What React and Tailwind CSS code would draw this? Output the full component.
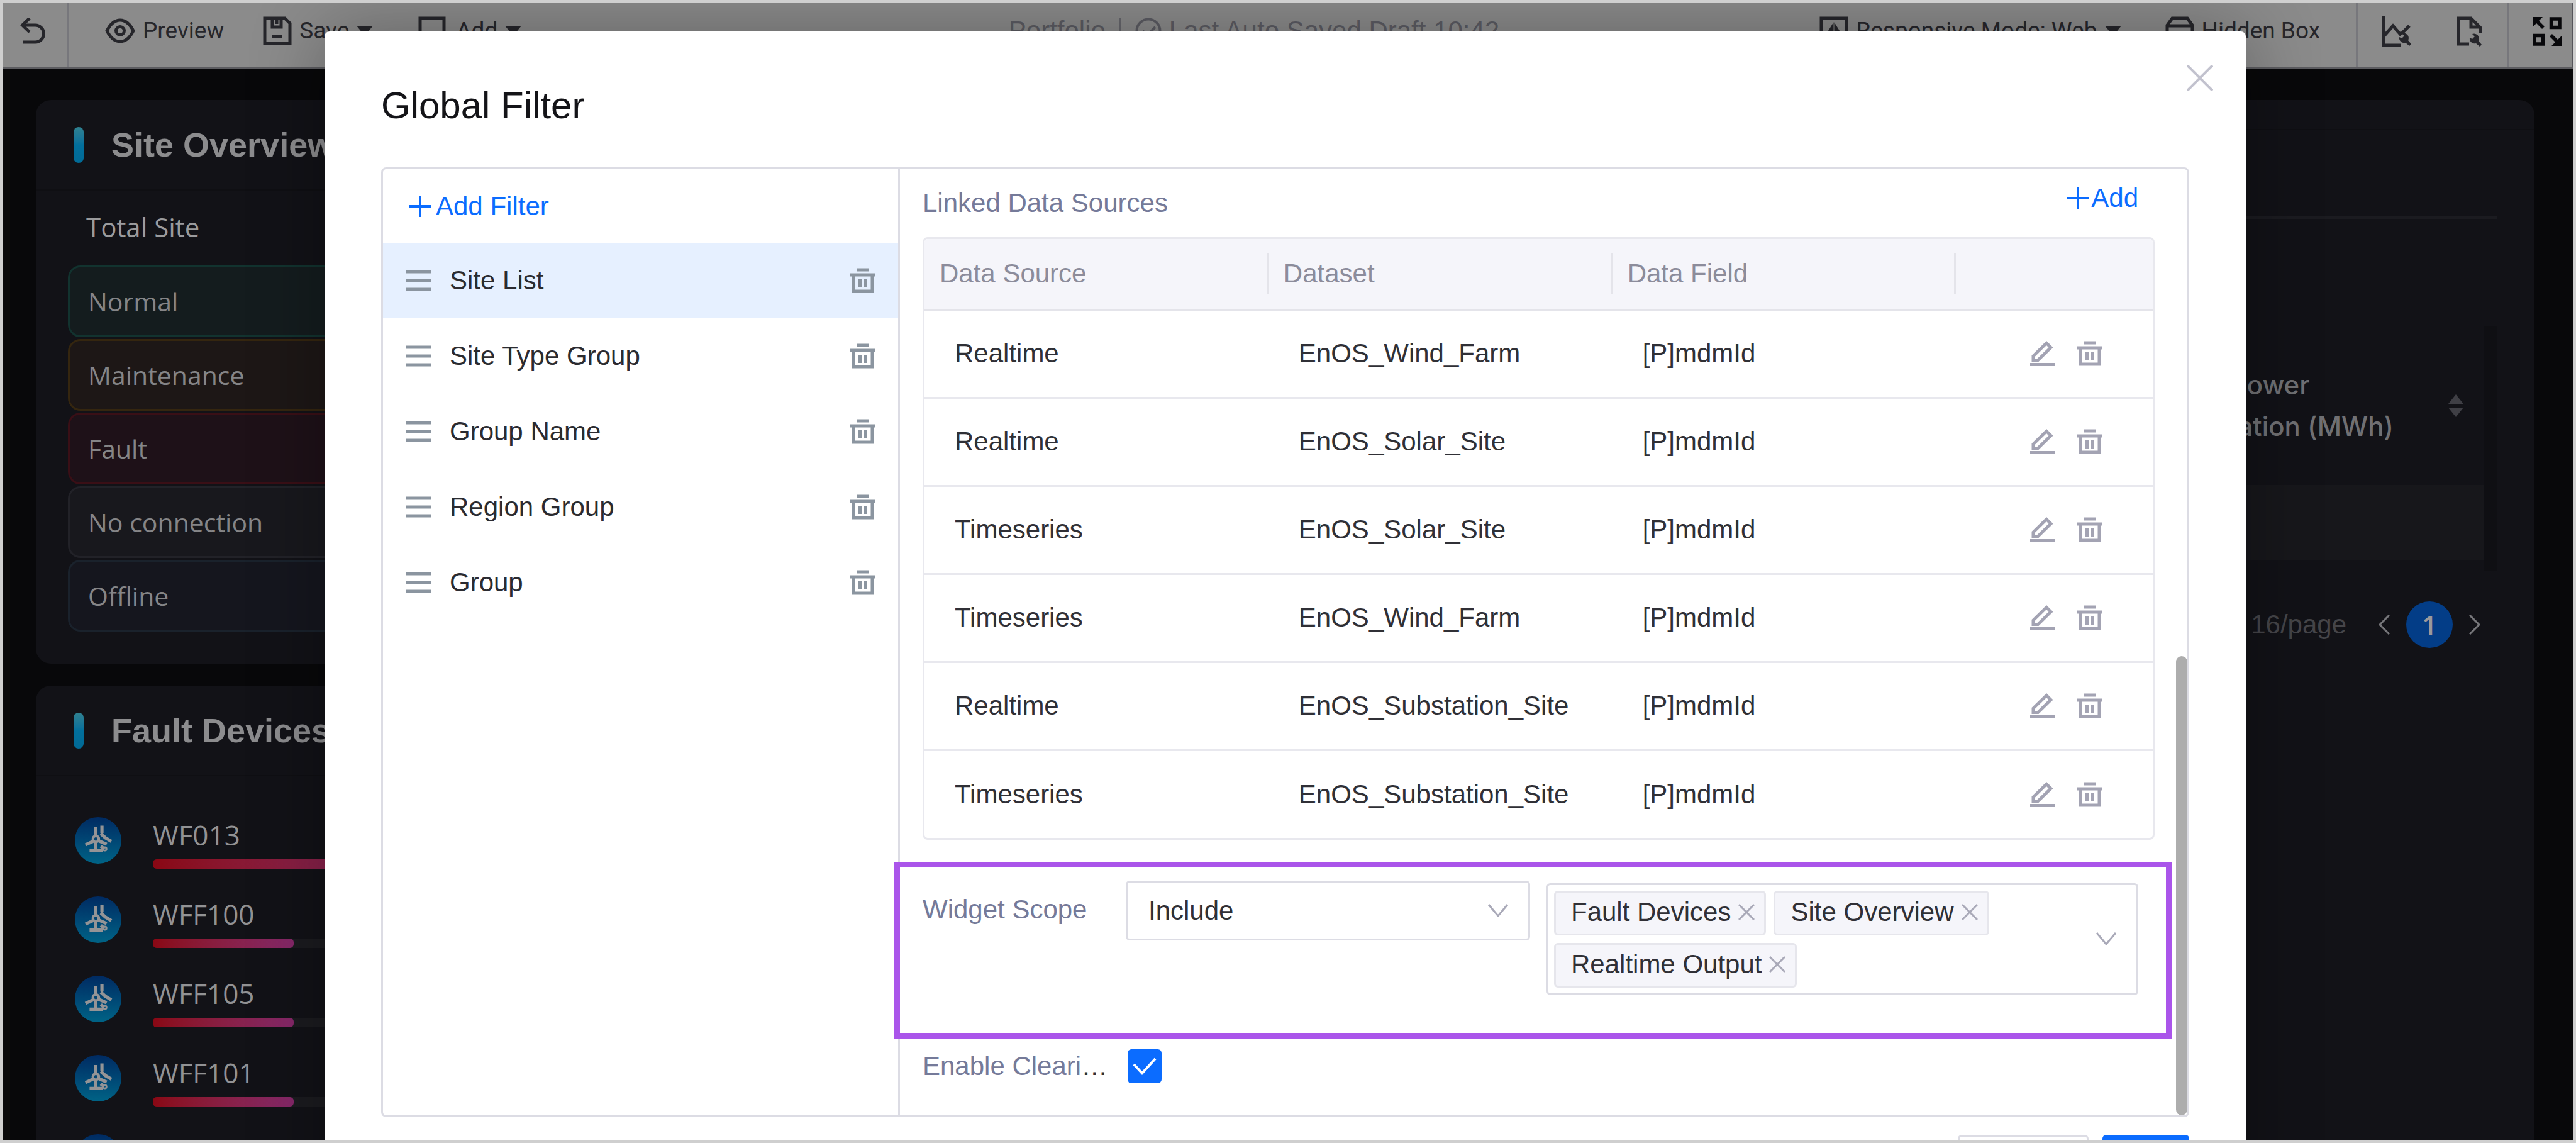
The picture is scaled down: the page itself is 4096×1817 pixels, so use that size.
import React from "react";

const UI = "font-['Liberation_Sans',Arial,sans-serif]";

const filters = ["Site List", "Site Type Group", "Group Name", "Region Group", "Group"];

const sources = [
  ["Realtime", "EnOS_Wind_Farm", "[P]mdmId"],
  ["Realtime", "EnOS_Solar_Site", "[P]mdmId"],
  ["Timeseries", "EnOS_Solar_Site", "[P]mdmId"],
  ["Timeseries", "EnOS_Wind_Farm", "[P]mdmId"],
  ["Realtime", "EnOS_Substation_Site", "[P]mdmId"],
  ["Timeseries", "EnOS_Substation_Site", "[P]mdmId"],
];

const statuses = [
  ["Normal", "border-[#12332f] bg-[#141c1e]"],
  ["Maintenance", "border-[#35260f] bg-[#1d1716]"],
  ["Fault", "border-[#3a0f16] bg-[#1e1118]"],
  ["No connection", "border-[#222228] bg-[#18181d]"],
  ["Offline", "border-[#1a222c] bg-[#15161e]"],
];

const devices = [
  ["WF013", 100],
  ["WFF100", 48],
  ["WFF105", 48],
  ["WFF101", 48],
];

const scopes = ["Fault Devices", "Site Overview", "Realtime Output"];

function Caret() {
  return (
    <svg viewBox="0 0 26 16" className="h-4 w-[26px] shrink-0" fill="currentColor" aria-hidden="true">
      <path d="M0 0h26L13 16z" />
    </svg>
  );
}

function Plus() {
  return (
    <svg viewBox="0 0 34 34" className="size-[34px] shrink-0" stroke="currentColor" strokeWidth="4" aria-hidden="true">
      <path d="M17 0v34M0 17h34" />
    </svg>
  );
}

function Trash({ className }) {
  return (
    <svg viewBox="0 0 40 40" className={className} fill="none" stroke="currentColor" aria-hidden="true">
      <path d="M10 3h20M0 11h40" strokeWidth="5" />
      <path d="M5 11v26h30V11" strokeWidth="5" />
      <path d="M15.500 18v13M24.500 18v13" strokeWidth="5" />
    </svg>
  );
}

function Pencil() {
  return (
    <svg viewBox="0 0 40 40" className="size-10" fill="none" stroke="currentColor" strokeWidth="5" aria-hidden="true">
      <path d="M5 30.500V24L26 3.500l7 7L12.500 30.500z" />
      <path d="M0 37.500h40" />
    </svg>
  );
}

function Down() {
  return (
    <svg viewBox="0 0 32 22" className="pointer-events-none h-[22px] w-8 shrink-0 text-[#a9a9b8]" fill="none" stroke="currentColor" strokeWidth="3" aria-hidden="true">
      <path d="M1 1l15 18L31 1" />
    </svg>
  );
}

function Turbine() {
  return (
    <span className="flex size-[74px] shrink-0 rounded-full bg-linear-to-b from-[#002a62] to-[#006386]">
      <svg viewBox="0 0 79 79" className="size-full" fill="none" stroke="#949496" strokeWidth="5.500" aria-hidden="true">
        <circle cx="35.700" cy="37" r="5" strokeWidth="4.500" />
        <path d="M35.700 17v15M31 41l-13 6M40 40l14 6M35.700 42v14M25 57h22" />
        <path d="M46 14.500V27M44 28l9 8M50 34l12 7M44 49l6 5" />
        <circle cx="51" cy="54" r="1.500" />
      </svg>
    </span>
  );
}

function ToolButton({ children, className }) {
  return <button className={"flex items-center " + (className || "")}>{children}</button>;
}

function Wrench({ x, y }) {
  return (
    <g transform={`translate(${x} ${y})`}>
      <path d="M5 0 L9 4 L5 8 L1 6 A8 8 0 0 0 11 15 L17 20 L20 17 L15 11 A8 8 0 0 0 5 0z" fill="currentColor" stroke="none" />
    </g>
  );
}

function Toolbar() {
  return (
    <header className="flex h-[106px] items-stretch border-b-3 border-[#5c5c60] bg-[#8b8b8b] font-[Roboto,sans-serif] text-[37px] leading-none text-[#26262b]">
      <div className="flex flex-1 items-stretch">
        <div className="flex w-[105px] items-center border-r-3 border-[#77777c] pb-[14px] pl-[28px]">
          <button aria-label="Undo">
            <svg viewBox="0 0 40 42" className="h-[42px] w-10" fill="none" stroke="currentColor" strokeWidth="5">
              <path d="M15 1L3.500 12 15 23M4 12h20a13.500 13.500 0 0 1 0 27H5" />
            </svg>
          </button>
        </div>
        <div className="flex items-center pb-[14px] pl-[58px]">
          <ToolButton className="gap-3">
            <svg viewBox="0 0 48 40" className="h-10 w-12" fill="none" stroke="currentColor" strokeWidth="5" aria-hidden="true">
              <path d="M3 20C9 8 16 3 24 3s15 5 21 17c-6 12-13 17-21 17S9 32 3 20z" />
              <circle cx="24" cy="20" r="6.500" />
            </svg>
            Preview
          </ToolButton>
          <ToolButton className="ml-[62px]">
            <svg viewBox="0 0 46 46" className="size-[46px]" fill="none" stroke="currentColor" strokeWidth="5" aria-hidden="true">
              <path d="M3 3h32l8 8v32H3zM15 3v14h14V3M15 32h16" />
              <path d="M22 3v9" />
            </svg>
            <span className="mr-3 ml-3">Save</span>
            <Caret />
          </ToolButton>
          <ToolButton className="ml-[72px]">
            <svg viewBox="0 0 44 46" className="h-[46px] w-11" fill="none" stroke="currentColor" strokeWidth="5" aria-hidden="true">
              <path d="M41 25V3H3v38h24M33 29v16M25 37h16" />
            </svg>
            <span className="mr-3 ml-4">Add</span>
            <Caret />
          </ToolButton>
        </div>
      </div>
      <div className={"flex items-center gap-[18px] pr-[108px] pb-[14px] text-[42px] text-[#5c5c63] " + UI}>
        <span>Portfolio</span>
        <span className="mx-1 h-[42px] w-[3px] bg-[#66666c]" />
        <span className="flex items-center gap-3">
          <svg viewBox="0 0 42 42" className="size-[42px]" fill="none" stroke="currentColor" strokeWidth="4" aria-hidden="true">
            <circle cx="21" cy="21" r="18.500" />
            <path d="M12 21l7 7 13-13" />
          </svg>
          Last Auto Saved Draft 10:42
        </span>
      </div>
      <div className="flex flex-1 items-stretch justify-end">
        <div className="flex items-center pr-[57px] pb-[14px]">
          <ToolButton>
            <svg viewBox="0 0 46 46" className="size-[46px]" fill="none" stroke="currentColor" strokeWidth="5" aria-hidden="true">
              <path d="M3 3h40v32H3zM12 43h22M15 26l5-8v12M31 26l-5-8v12" />
            </svg>
            <span className="mr-3 ml-3">Responsive Mode: Web</span>
            <Caret />
          </ToolButton>
          <ToolButton className="ml-[70px] gap-3">
            <svg viewBox="0 0 46 46" className="size-[46px]" fill="none" stroke="currentColor" strokeWidth="5" aria-hidden="true">
              <path d="M11 3h24l8 11v29H3V14zM3 15h40M15 24v3M31 24v3M14 33h18" />
            </svg>
            Hidden Box
          </ToolButton>
        </div>
        <div className="flex w-[243px] items-center justify-between border-x-3 border-[#77777c] pr-[38px] pb-[12px] pl-[38px]">
          <button aria-label="Chart settings">
            <svg viewBox="0 0 48 50" className="h-[50px] w-12" fill="none" stroke="currentColor" strokeWidth="5">
              <path d="M3 0v47h28M3 33l15-17 13 15M32 28l12-12" />
              <Wrench x={27} y={28} />
            </svg>
          </button>
          <button aria-label="Page settings">
            <svg viewBox="0 0 42 48" className="h-12 w-[42px]" fill="none" stroke="currentColor" strokeWidth="5">
              <path d="M20 44H3V3h20l15 15v8M23 3v14h15" />
              <Wrench x={20} y={28} />
            </svg>
          </button>
        </div>
        <div className="flex w-[103px] items-center border-r-3 border-[#55555a] pb-[12px] pl-[38px] text-[#08080b]">
          <button aria-label="Full screen">
            <svg viewBox="0 0 46 46" className="size-[46px]" fill="none" stroke="currentColor" strokeWidth="5.500">
              <path d="M29.500 3h13.500v13.500H29.500zM3 29.500h13.500v13.500H3z" />
              <path d="M5 5l12 12M29 29l12 12" />
              <path d="M0 0h16L0 16zM46 46H30l16-16z" fill="currentColor" stroke="none" />
            </svg>
          </button>
        </div>
      </div>
    </header>
  );
}

function PanelTitle({ children }) {
  return (
    <div className="flex h-[144px] items-center border-b-2 border-[#0f0f13] pl-[60px]">
      <span className="h-[57px] w-4 rounded-full bg-linear-to-b from-[#2f8190] via-[#026f9c] to-[#016a96]" />
      <h2 className="ml-[44px] text-[54px] leading-none font-bold whitespace-nowrap text-[#8c8c8e]">{children}</h2>
    </div>
  );
}

function Dashboard() {
  return (
    <main className={"flex flex-1 items-stretch gap-9 overflow-hidden pt-[49px] pr-[62px] pl-[53px] " + UI}>
      <div className="flex w-[700px] shrink-0 flex-col gap-[35px]">
        <section className="rounded-3xl bg-[#121217] pb-[51px]">
          <PanelTitle>Site Overview</PanelTitle>
          <div className="font-['Open_Sans',sans-serif] text-[41px] leading-none">
            <p className="flex h-[119px] items-center pb-1 pl-[80px] text-[42px] text-[#9b9b9d]">Total Site</p>
            <ul className="mx-[51px] flex flex-col gap-[3px] text-[#858587]">
              {statuses.map(([name, tone]) => (
                <li key={name} className={"flex h-[114px] items-center rounded-[20px] border-3 pl-[29px] " + tone}>
                  {name}
                </li>
              ))}
            </ul>
          </div>
        </section>
        <section className="flex-1 rounded-t-3xl bg-[#121217]">
          <PanelTitle>Fault Devices</PanelTitle>
          <ul className="mt-[65px] flex flex-col gap-[40px] pr-[48px] pl-[62px]">
            {devices.map(([name, level]) => (
              <li key={name} className="flex items-start gap-[50px]">
                <Turbine />
                <div className="h-[86px] flex-1">
                  <p className="h-[67px] font-['Open_Sans',sans-serif] text-[44px] leading-[56px] font-medium text-[#929294]">{name}</p>
                  <div className="h-[15px] rounded-md bg-[#1b1b1f]">
                    <div className="h-full rounded-md bg-linear-to-r from-[#8a0713] to-[#86286a]" style={{ width: level + "%" }} />
                  </div>
                </div>
              </li>
            ))}
            <li>
              <Turbine />
            </li>
          </ul>
        </section>
      </div>
      <section className="flex-1 rounded-t-3xl bg-[#121217] pr-[59px]">
        <div className="-mr-[59px] h-[48px] border-b-2 border-[#0f0f13]" />
        <div className="mt-[136px] h-[5px] bg-[#1b1b20]" />
        <div className="mt-[171px] border-r-[21px] border-[#0f0f13] pb-[17px]">
          <table className="w-full border-collapse text-left">
            <thead>
              <tr>
                <th className="h-[252px] pr-[33px] font-medium">
                  <button className="ml-auto flex items-center gap-[87px] text-left font-[Inter,sans-serif] text-[42px] leading-[66px] font-medium text-[#707073]">
                    <span>
                      Total Power
                      <br />
                      Generation (MWh)
                    </span>
                    <svg viewBox="0 0 24 36" className="h-9 w-6 text-[#3f3f45]" fill="currentColor" aria-hidden="true">
                      <path d="M12 0l12 15H0zM12 36L0 21h24z" />
                    </svg>
                  </button>
                </th>
              </tr>
            </thead>
            <tbody>
              <tr>
                <td className="h-[120px] bg-[#17171b]" />
              </tr>
            </tbody>
          </table>
        </div>
        <nav className="mt-[48px] flex items-center justify-end pr-[26px] text-[42px] leading-none text-[#77777b]">
          <span className="mr-[50px] text-[#454549]">16/page</span>
          <button aria-label="Previous page">
            <svg viewBox="0 0 20 32" className="h-8 w-5" fill="none" stroke="currentColor" strokeWidth="3">
              <path d="M18 1L3 16l15 15" />
            </svg>
          </button>
          <button className="mx-[25px] size-[74px] rounded-full bg-[#033d87] font-['Open_Sans',sans-serif] font-semibold text-[#9a9a9c]">1</button>
          <button aria-label="Next page">
            <svg viewBox="0 0 20 32" className="h-8 w-5" fill="none" stroke="currentColor" strokeWidth="3">
              <path d="M2 1l15 15L2 31" />
            </svg>
          </button>
        </nav>
      </section>
    </main>
  );
}

function FilterList() {
  return (
    <aside className="w-[822px] shrink-0 border-r-3 border-[#dcdce4]">
      <button className="flex h-[117px] items-center gap-2 pl-[42px] text-[#0b6cff]">
        <Plus />
        Add Filter
      </button>
      <ul>
        {filters.map((name, i) => (
          <li key={name} className={"flex h-[120px] items-center pr-[36px] pl-[36px] text-[#2b2b30] " + (i === 0 ? "bg-[#e6f0ff]" : "")}>
            <svg viewBox="0 0 40 36" className="mr-[30px] h-9 w-10 text-[#8b95a0]" stroke="currentColor" strokeWidth="5" aria-hidden="true">
              <path d="M0 4h40M0 18h40M0 32h40" />
            </svg>
            <span className="flex-1">{name}</span>
            <button aria-label={"Delete " + name} className="text-[#8b95a0]">
              <Trash className="size-10" />
            </button>
          </li>
        ))}
      </ul>
    </aside>
  );
}

function SourceTable() {
  return (
    <div className="overflow-hidden rounded-lg border-3 border-[#e8e8ee]">
      <table className="w-full table-fixed border-collapse text-left">
        <thead className="bg-[#f5f5fa] text-[#8c8c9b]">
          <tr className="h-[112px] border-b-3 border-[#e4e4ea]">
            {["Data Source", "Dataset", "Data Field"].map((h) => (
              <th key={h} className="w-[28%] p-0 font-normal">
                <span className="flex h-[66px] items-center border-r-3 border-[#e4e4ea] pl-6">{h}</span>
              </th>
            ))}
            <th aria-label="Actions" />
          </tr>
        </thead>
        <tbody className="text-[#303036]">
          {sources.map((row, i) => (
            <tr key={i} className="h-[140px] border-b-3 border-[#e8e8ee] last:border-b-0">
              {row.map((cell, j) => (
                <td key={j} className="p-0 pl-12">
                  {cell}
                </td>
              ))}
              <td className="p-0 pr-[80px]">
                <span className="flex justify-end gap-[35px] text-[#a3a3b3]">
                  <button aria-label="Edit">
                    <Pencil />
                  </button>
                  <button aria-label="Delete">
                    <Trash className="size-10" />
                  </button>
                </span>
              </td>
            </tr>
          ))}
        </tbody>
      </table>
    </div>
  );
}

function FilterDialog() {
  return (
    <div
      role="dialog"
      aria-label="Global Filter"
      className={"relative h-fit flex-1 rounded-t-lg bg-white px-[90px] pt-[82px] pb-[60px] text-[42px] leading-[48px] shadow-[0_0_120px_rgba(0,0,0,0.3)] " + UI}
    >
      <h1 className="mb-[62px] text-[60px] leading-[72px] text-[#141418]">Global Filter</h1>
      <button aria-label="Close" className="absolute top-[53px] right-[52px]">
        <svg viewBox="0 0 42 42" className="size-[42px] text-[#c2c2ce]" stroke="currentColor" strokeWidth="4">
          <path d="M1 1l40 40M41 1L1 41" />
        </svg>
      </button>
      <div className="relative flex items-stretch rounded-lg border-3 border-[#dcdce4]">
        <FilterList />
        <section className="min-w-0 flex-1 pr-[52px] pb-[51px] pl-[36px]">
          <div className="flex h-[108px] justify-between pr-[26px]">
            <h3 className="flex items-center text-[#757a99]">Linked Data Sources</h3>
            <button className="flex h-[92px] items-center gap-1 text-[#0b6cff]">
              <Plus />
              Add
            </button>
          </div>
          <SourceTable />
          <div className="mt-[35px] -mr-[27px] -ml-[45px] flex items-start border-9 border-[#aa55ea] pt-[21px] pr-[44px] pb-[60px] pl-[36px]">
            <label htmlFor="scope" className="flex h-[92px] w-[323px] shrink-0 items-center text-[#757a99]">
              Widget Scope
            </label>
            <div className="flex h-[95px] w-[643px] shrink-0 items-center rounded-md border-3 border-[#dcdce4]">
              <select id="scope" className="-mr-[64px] h-full w-full appearance-none bg-transparent pl-[33px] text-[#303036]">
                <option>Include</option>
                <option>Exclude</option>
              </select>
              <Down />
            </div>
            <div className="mt-1 ml-[26px] flex min-w-0 flex-1 items-center rounded-md border-3 border-[#dcdce4] p-[9px]">
              <ul className="flex flex-1 flex-wrap gap-3 pr-[80px]">
                {scopes.map((name) => (
                  <li key={name} className="flex h-[71px] items-center gap-3 rounded-md border-3 border-[#e6e6ec] bg-[#f5f5fa] pr-[15px] pb-1 pl-6 text-[#303036]">
                    {name}
                    <button aria-label={"Remove " + name}>
                      <svg viewBox="0 0 26 26" className="size-[26px] text-[#a9a9b8]" stroke="currentColor" strokeWidth="3">
                        <path d="M1 1l24 24M25 1L1 25" />
                      </svg>
                    </button>
                  </li>
                ))}
              </ul>
              <span className="pr-[23px]">
                <Down />
              </span>
            </div>
          </div>
          <div className="mt-[17px] flex h-[54px] items-center">
            <label htmlFor="clearing" className="w-[326px] text-[#303036]">
              <span className="text-[#757a99]">Enable Cleari</span>…
            </label>
            <span className="grid size-[54px] place-items-center">
              <input id="clearing" type="checkbox" defaultChecked className="col-start-1 row-start-1 size-[54px] appearance-none rounded-md bg-[#0b6cff]" />
              <svg viewBox="0 0 38 28" className="pointer-events-none col-start-1 row-start-1 h-7 w-[38px]" fill="none" stroke="white" strokeWidth="4" aria-hidden="true">
                <path d="M2 11l13 14L36 2" />
              </svg>
            </span>
          </div>
        </section>
        <div className="absolute right-0 bottom-0 h-[730px] w-[18px] rounded-full bg-[#adadad]" />
      </div>
      <div className="mt-[28px] flex justify-end gap-[22px]">
        <button aria-label="Cancel" className="h-[96px] w-[208px] rounded-md border-3 border-[#dcdce4]" />
        <button aria-label="OK" className="h-[96px] w-[138px] rounded-md bg-[#0b6cff]" />
      </div>
    </div>
  );
}

export default function App() {
  return (
    <div className="relative flex h-screen flex-col overflow-hidden border-4 border-[#cfcfcf] bg-[#08080a]">
      <Toolbar />
      <Dashboard />
      <div className="absolute inset-0 flex items-start overflow-hidden pt-[46px] pr-[521px] pl-[512px]">
        <FilterDialog />
      </div>
    </div>
  );
}
